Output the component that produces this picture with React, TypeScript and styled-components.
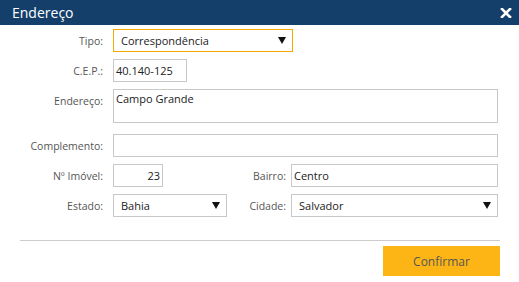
import React from 'react';
import styled, { createGlobalStyle } from 'styled-components';

const GlobalStyle = createGlobalStyle`
  html, body {
    margin: 0;
    padding: 0;
    background: #ffffff;
  }
  body {
    font-family: 'Segoe UI', 'Open Sans', 'Noto Sans', sans-serif;
  }
`;

const Dialog = styled.div`
  width: 519px;
  height: 282px;
  background: #ffffff;
  display: flex;
  flex-direction: column;
  overflow: hidden;
`;

const Header = styled.div`
  height: 25px;
  background: #133f6a;
  display: flex;
  align-items: center;
  justify-content: space-between;
  padding: 0 6px 0 12px;
  flex-shrink: 0;
`;

const Title = styled.h1`
  margin: 0;
  font-size: 14px;
  font-weight: 400;
  color: #ffffff;
  line-height: 25px;
`;

const CloseButton = styled.button`
  background: none;
  border: none;
  padding: 0;
  width: 14px;
  height: 14px;
  display: flex;
  align-items: center;
  justify-content: center;
  cursor: pointer;
`;

const Form = styled.div`
  display: flex;
  flex-direction: column;
  gap: 7px;
  padding: 4px 21px 0 20px;
`;

const Row = styled.div<{ $top?: boolean; $gapAfter?: number }>`
  display: flex;
  align-items: ${p => (p.$top ? 'flex-start' : 'center')};
  gap: 10px;
  margin-bottom: ${p => p.$gapAfter ?? 0}px;
`;

const Label = styled.label<{ $pad?: number }>`
  flex: 0 0 83px;
  text-align: right;
  font-size: 10.5px;
  color: #555555;
  padding-top: ${p => p.$pad ?? 0}px;
  white-space: nowrap;
`;

const SideLabel = styled(Label)`
  flex: 1;
  margin-right: -5px;
`;

const TextInput = styled.input<{ $width?: number; $right?: boolean }>`
  box-sizing: border-box;
  width: ${p => (p.$width ? `${p.$width}px` : 'auto')};
  flex: ${p => (p.$width ? 'none' : '1')};
  min-width: 0;
  height: 23px;
  border: 1px solid #c8c8c8;
  padding: 0 2px;
  font-family: inherit;
  font-size: 11px;
  color: #222222;
  text-align: ${p => (p.$right ? 'right' : 'left')};
  outline: none;
  background: #ffffff;
`;

const TextArea = styled.textarea`
  box-sizing: border-box;
  flex: 1;
  height: 34px;
  border: 1px solid #c8c8c8;
  padding: 1px 2px;
  font-family: inherit;
  font-size: 11px;
  color: #222222;
  resize: none;
  outline: none;
  overflow: hidden;
`;

const SelectBox = styled.div<{ $width?: number; $focused?: boolean }>`
  box-sizing: border-box;
  width: ${p => (p.$width ? `${p.$width}px` : 'auto')};
  flex: ${p => (p.$width ? 'none' : '1')};
  height: 23px;
  border: 1px solid ${p => (p.$focused ? '#f5a800' : '#c8c8c8')};
  display: flex;
  align-items: center;
  justify-content: space-between;
  padding: 0 6px 0 7px;
  font-size: 11px;
  color: #222222;
  background: #ffffff;
`;

const Caret = styled.span`
  width: 0;
  height: 0;
  border-left: 4px solid transparent;
  border-right: 4px solid transparent;
  border-top: 7px solid #111111;
`;

const Footer = styled.div`
  margin: 23px 19px 0 20px;
  border-top: 1px solid #cccccc;
  padding-top: 5px;
  display: flex;
  justify-content: flex-end;
`;

const ConfirmButton = styled.button`
  width: 117px;
  height: 30px;
  border: none;
  background: #fdb515;
  color: #555555;
  font-family: inherit;
  font-size: 12px;
  cursor: pointer;
`;

const Select = ({ value, width, focused }: { value: string; width?: number; focused?: boolean }) => (
  <SelectBox $width={width} $focused={focused}>
    <span>{value}</span>
    <Caret />
  </SelectBox>
);

export default function App() {
  return (
    <>
      <GlobalStyle />
      <Dialog>
        <Header>
          <Title>Endereço</Title>
          <CloseButton aria-label="Fechar">
            <svg width="12" height="10" viewBox="0 0 12 10">
              <path d="M2 1 L10 9 M10 1 L2 9" stroke="#ffffff" strokeWidth="2.6" strokeLinecap="square" />
            </svg>
          </CloseButton>
        </Header>
        <Form>
          <Row>
            <Label>Tipo:</Label>
            <Select value="Correspondência" width={180} focused />
          </Row>
          <Row>
            <Label>C.E.P.:</Label>
            <TextInput readOnly value="40.140-125" $width={74} />
          </Row>
          <Row $top $gapAfter={4}>
            <Label $pad={5}>Endereço:</Label>
            <TextArea readOnly value="Campo Grande" />
          </Row>
          <Row>
            <Label>Complemento:</Label>
            <TextInput readOnly value="" />
          </Row>
          <Row>
            <Label>Nº Imóvel:</Label>
            <TextInput readOnly value="23" $width={50} $right />
            <SideLabel>Bairro:</SideLabel>
            <TextInput readOnly value="Centro" $width={207} />
          </Row>
          <Row>
            <Label>Estado:</Label>
            <Select value="Bahia" width={114} />
            <SideLabel>Cidade:</SideLabel>
            <Select value="Salvador" width={207} />
          </Row>
        </Form>
        <Footer>
          <ConfirmButton>Confirmar</ConfirmButton>
        </Footer>
      </Dialog>
    </>
  );
}
